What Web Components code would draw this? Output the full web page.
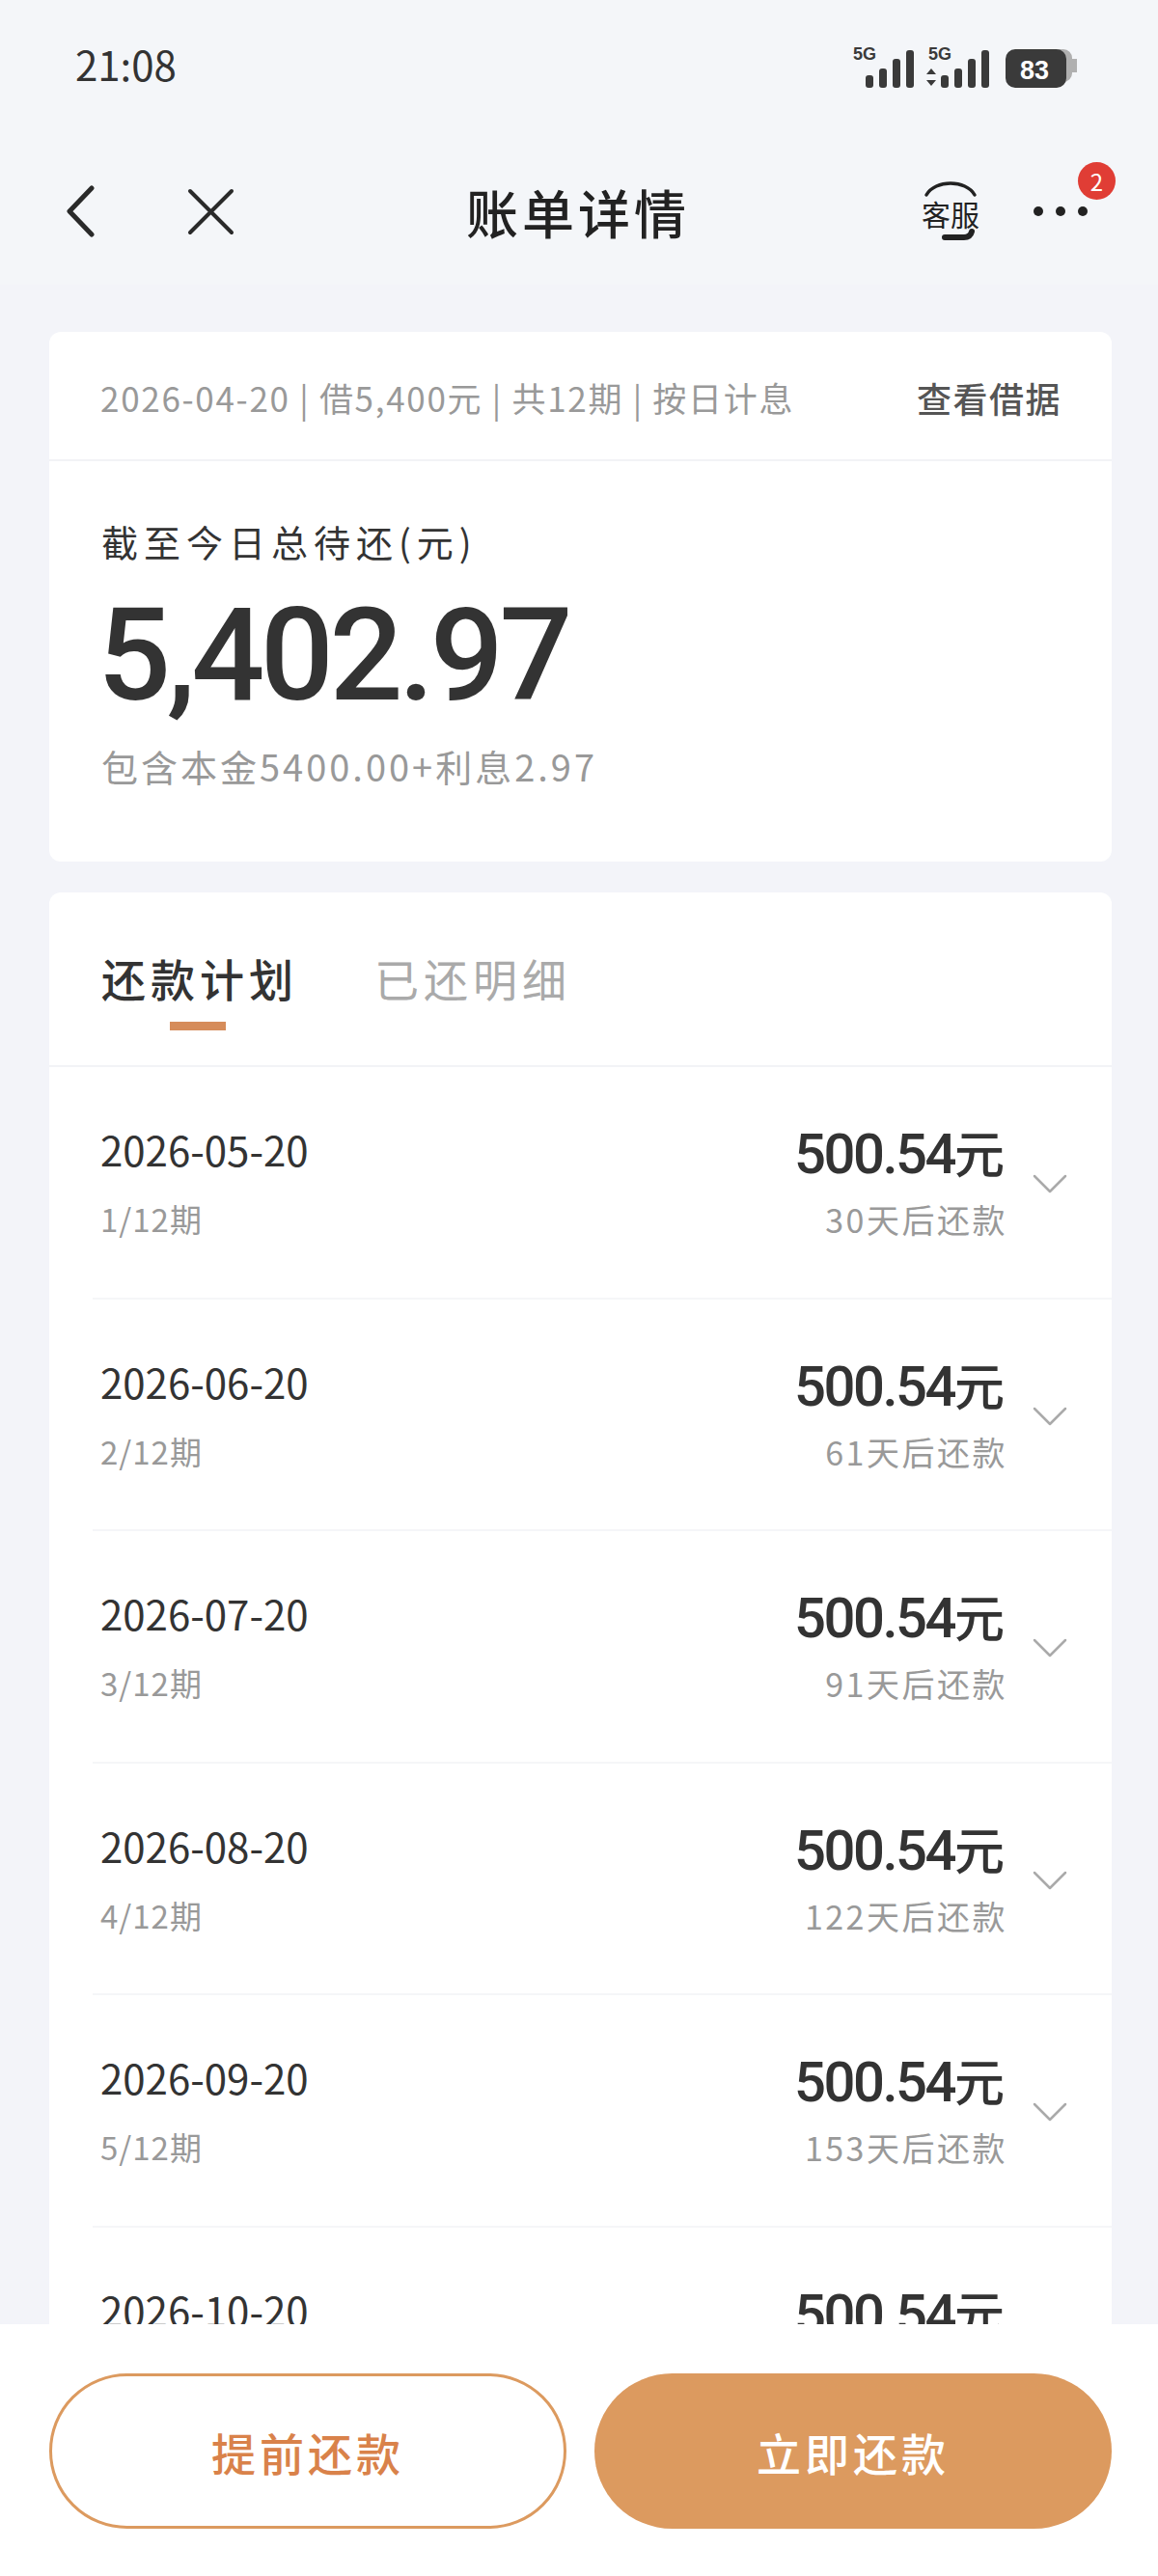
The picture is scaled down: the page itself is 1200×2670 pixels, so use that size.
<!DOCTYPE html>
<html lang="zh">
<head>
<meta charset="utf-8">
<title>账单详情</title>
<style>
  html, body { margin: 0; padding: 0; }
  body {
    width: 1200px;
    height: 2670px;
    overflow: hidden;
    display: flex;
    flex-direction: column;
    background: #f3f4f9;
    color: #333;
    font-family: "Noto Sans CJK SC", sans-serif;
  }
  .scroll {
    flex: 1;
    min-height: 0;
    overflow: hidden;
    display: flex;
    flex-direction: column;
    gap: 32px;
    padding: 49px 48px 0 51px;
  }
</style>
</head>
<body>
<top-header></top-header>
<div class="scroll">
  <loan-summary></loan-summary>
  <plan-card>
    <plan-row><span slot="date">2026-05-20</span><span slot="term">1/12期</span><span slot="days">30天后还款</span></plan-row>
    <plan-row><span slot="date">2026-06-20</span><span slot="term">2/12期</span><span slot="days">61天后还款</span></plan-row>
    <plan-row><span slot="date">2026-07-20</span><span slot="term">3/12期</span><span slot="days">91天后还款</span></plan-row>
    <plan-row><span slot="date">2026-08-20</span><span slot="term">4/12期</span><span slot="days">122天后还款</span></plan-row>
    <plan-row><span slot="date">2026-09-20</span><span slot="term">5/12期</span><span slot="days">153天后还款</span></plan-row>
    <plan-row><span slot="date">2026-10-20</span><span slot="term">6/12期</span><span slot="days">183天后还款</span></plan-row>
  </plan-card>
</div>
<action-bar></action-bar>

<script>
class TopHeader extends HTMLElement {
  constructor() {
    super();
    this.attachShadow({ mode: 'open' });
  }

  connectedCallback() {
    this.shadowRoot.innerHTML = `
      <style>
        :host {
          display: block;
          height: 295px;
          background: #f4f6f9;
          flex: none;
        }
        .status {
          height: 136px;
          display: flex;
          align-items: center;
          justify-content: space-between;
          padding: 0 84px 0 78px;
        }
        .time { font-size: 42px; line-height: 48px; color: #333; margin-bottom: 4px; }
        .nav {
          height: 152px;
          display: flex;
          align-items: center;
          padding: 7px 73px 0 66px;
        }
        .nav svg { display: block; flex: none; }
        .back { margin-right: 95px; }
        .title {
          flex: 1;
          text-align: center;
          font-size: 54px;
          font-weight: 500;
          letter-spacing: 4px;
          color: #222;
        }
        .service { margin-right: 54px; position: relative; width: 62px; height: 64px; }
        .service span {
          position: absolute;
          left: 0;
          top: 17px;
          font-size: 30px;
          line-height: 34px;
          white-space: nowrap;
          color: #222;
        }
        .service svg { position: absolute; left: 0; top: 0; }
        .more { position: relative; }
        .badge {
          position: absolute;
          left: 46px;
          top: -45px;
          width: 39px;
          height: 39px;
          border-radius: 50%;
          background: #e03d35;
          color: #fff;
          font-size: 24px;
          line-height: 39px;
          text-align: center;
        }
      </style>
      <div class="status">
        <span class="time">21:08</span>
        <svg width="238" height="46" viewBox="0 0 238 46">
          <g fill="#3a3a3a" font-family="Liberation Sans" font-size="18" font-weight="700">
            <text x="6" y="17">5G</text>
            <text x="84" y="17">5G</text>
          </g>
          <g fill="#3a3a3a">
            <rect x="19" y="33" width="8" height="13" rx="3"/>
            <rect x="33" y="26" width="8" height="20" rx="3"/>
            <rect x="47" y="16" width="8" height="30" rx="3"/>
            <rect x="61" y="7" width="8" height="39" rx="3"/>
            <path d="M82 32l5-6 5 6zM82 38h10l-5 6z"/>
            <rect x="97" y="33" width="8" height="13" rx="3"/>
            <rect x="111" y="26" width="8" height="20" rx="3"/>
            <rect x="125" y="16" width="8" height="30" rx="3"/>
            <rect x="139" y="7" width="8" height="39" rx="3"/>
          </g>
          <path d="M218 6h6a9 9 0 0 1 9 9v1h5v14h-5v1a9 9 0 0 1-9 9h-6z" fill="#b0b0b0"/>
          <rect x="164" y="6" width="63" height="40" rx="10" fill="#3a3a3a"/>
          <text x="179" y="37" fill="#fff" font-family="Liberation Sans" font-size="27" font-weight="700">83</text>
        </svg>
      </div>
      <div class="nav">
        <svg class="back" width="33" height="54" viewBox="0 0 33 54" fill="none" stroke="#2a2a2a" stroke-width="5" stroke-linecap="round" stroke-linejoin="round">
          <path d="M29 3L6 27l23 24"/>
        </svg>
        <svg width="49" height="49" viewBox="0 0 49 49" fill="none" stroke="#2a2a2a" stroke-width="4" stroke-linecap="round">
          <path d="M3 3l43 43M46 3L3 46"/>
        </svg>
        <div class="title">账单详情</div>
        <div class="service">
          <svg width="62" height="66" viewBox="0 0 62 66" fill="none" stroke="#222" stroke-linecap="round">
            <path d="M5 15C14 -1 46 -1 55 15" stroke-width="3.5"/>
            <path d="M24 59h20c4 0 7-2 8-6" stroke-width="6"/>
          </svg>
          <span>客服</span>
        </div>
        <div class="more">
          <svg width="56" height="12" viewBox="0 0 56 12" fill="#222">
            <circle cx="5" cy="6" r="5"/><circle cx="28" cy="6" r="5"/><circle cx="51" cy="6" r="5"/>
          </svg>
          <span class="badge">2</span>
        </div>
      </div>
    `;
  }
}

class LoanSummary extends HTMLElement {
  constructor() {
    super();
    this.attachShadow({ mode: 'open' });
  }

  connectedCallback() {
    this.shadowRoot.innerHTML = `
      <style>
        :host {
          display: block;
          height: 549px;
          background: #fff;
          border-radius: 12px;
          flex: none;
        }
        .head {
          height: 132px;
          border-bottom: 2px solid #f2f3f6;
          display: flex;
          align-items: center;
          justify-content: space-between;
          padding: 0 52px 0 53px;
        }
        .meta { font-size: 35px; color: #999; letter-spacing: 1.7px; margin-top: 3px; }
        .link { font-size: 36px; color: #555; letter-spacing: 1.5px; font-weight: 500; margin-top: 3px; }
        .body { padding: 57px 54px 0; }
        .label { font-size: 38px; line-height: 52px; letter-spacing: 6px; color: #333; }
        .total {
          font-family: Roboto, sans-serif;
          font-size: 134px;
          font-weight: 500;
          line-height: 150px;
          letter-spacing: -4.5px;
          color: #333;
          margin: 18px 0 0 -4px;
        }
        .note { font-size: 38px; line-height: 52px; color: #999; letter-spacing: 3px; margin-top: 13px; }
      </style>
      <div class="head">
        <span class="meta">2026-04-20 | 借5,400元 | 共12期 | 按日计息</span>
        <span class="link">查看借据</span>
      </div>
      <div class="body">
        <div class="label">截至今日总待还(元)</div>
        <div class="total">5,402.97</div>
        <div class="note">包含本金5400.00+利息2.97</div>
      </div>
    `;
  }
}

class PlanCard extends HTMLElement {
  constructor() {
    super();
    this.attachShadow({ mode: 'open' });
  }

  connectedCallback() {
    this.shadowRoot.innerHTML = `
      <style>
        :host {
          display: block;
          background: #fff;
          border-radius: 12px 12px 0 0;
          flex: none;
        }
        .tabs {
          height: 181px;
          border-bottom: 2px solid #f2f3f6;
          display: flex;
          gap: 79px;
          padding: 0 0 0 54px;
          box-sizing: border-box;
        }
        .tab {
          position: relative;
          font-size: 46px;
          line-height: 60px;
          letter-spacing: 5px;
          padding-top: 58px;
          color: #aaa;
        }
        .tab.on { color: #333; font-weight: 500; }
        .tab.on::after {
          content: "";
          position: absolute;
          left: 71px;
          top: 134px;
          width: 58px;
          height: 9px;
          background: #d68c5a;
        }
      </style>
      <div class="tabs">
        <div class="tab on">还款计划</div>
        <div class="tab">已还明细</div>
      </div>
      <slot></slot>
    `;
  }
}

class PlanRow extends HTMLElement {
  constructor() {
    super();
    this.attachShadow({ mode: 'open' });
  }

  connectedCallback() {
    this.shadowRoot.innerHTML = `
      <style>
        :host {
          display: block;
          margin-left: 45px;
          height: 240.6px;
          box-sizing: border-box;
          border-bottom: 2px solid #f5f6f8;
        }
        .row {
          display: flex;
          padding: 57px 46px 0 8px;
        }
        .left { flex: 1; }
        .date { font-size: 42px; line-height: 56px; color: #333; }
        .term { font-size: 33px; line-height: 48px; letter-spacing: 1px; color: #999; margin-top: 20px; }
        .right { text-align: right; margin-right: 26px; }
        .amount {
          font-family: Roboto, "Noto Sans CJK SC", sans-serif;
          font-size: 58px;
          font-weight: 500;
          line-height: 56px;
          letter-spacing: -2.5px;
          color: #333;
          padding: 3px 3px 0 0;
        }
        .amount b { font-family: "Noto Sans CJK SC", sans-serif; font-weight: 500; font-size: 52px; letter-spacing: 0; }
        .days { font-size: 34px; line-height: 48px; letter-spacing: 2.5px; color: #999; margin-top: 16px; }
        svg { display: block; margin-top: 54px; flex: none; }
      </style>
      <div class="row">
        <div class="left">
          <div class="date"><slot name="date"></slot></div>
          <div class="term"><slot name="term"></slot></div>
        </div>
        <div class="right">
          <div class="amount">500.54<b>元</b></div>
          <div class="days"><slot name="days"></slot></div>
        </div>
        <svg width="36" height="20" viewBox="0 0 36 20" fill="none" stroke="#aaa" stroke-width="2.5" stroke-linecap="round" stroke-linejoin="round">
          <path d="M2 2l16 16L34 2"/>
        </svg>
      </div>
    `;
  }
}

class ActionBar extends HTMLElement {
  constructor() {
    super();
    this.attachShadow({ mode: 'open' });
  }

  connectedCallback() {
    this.shadowRoot.innerHTML = `
      <style>
        :host {
          display: flex;
          flex: none;
          height: 261px;
          box-sizing: border-box;
          background: #fff;
          padding: 51px 48px 0 51px;
          gap: 29px;
        }
        .btn {
          flex: 1;
          height: 161px;
          box-sizing: border-box;
          border-radius: 81px;
          display: flex;
          align-items: center;
          justify-content: center;
          font-size: 46px;
          font-weight: 500;
          letter-spacing: 4px;
        }
        .ghost { flex: 0 0 536px; border: 3px solid #dc9a5f; color: #d9824a; background: #fff; }
        .solid { background: #dc9a5f; color: #fff; }
      </style>
      <div class="btn ghost">提前还款</div>
      <div class="btn solid">立即还款</div>
    `;
  }
}

customElements.define('top-header', TopHeader);
customElements.define('loan-summary', LoanSummary);
customElements.define('plan-card', PlanCard);
customElements.define('plan-row', PlanRow);
customElements.define('action-bar', ActionBar);
</script>
</body>
</html>
